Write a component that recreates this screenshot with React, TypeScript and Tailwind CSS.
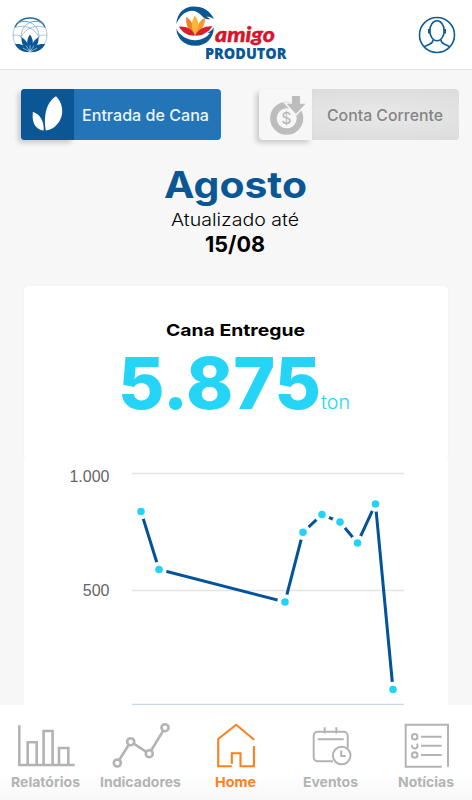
import type { ReactNode } from "react";

const gridLines = [
  { y: 14.5, color: "#e4e4e4" },
  { y: 131.5, color: "#e4e4e4" },
  { y: 245.5, color: "#ccd6eb" },
];

const points = [
  [117, 52.5],
  [135, 110.5],
  [261, 143],
  [279, 73.3],
  [298, 55.5],
  [316, 63],
  [333.5, 84],
  [351.5, 45],
  [369, 230.5],
];

const navItems: { label: string; width: number; active?: boolean; icon: ReactNode }[] = [
  {
    label: "Relatórios",
    width: 69,
    icon: (
      <>
        <path d="M3.3 3.3V43H58.7" />
        <path d="M11.7 43V20.3H20.7V43M27.6 43V9H36.6V43M43 43V26H52.3V43" />
      </>
    ),
  },
  {
    label: "Indicadores",
    width: 81,
    icon: (
      <>
        <path d="M8.2 38L17.8 22.7M22.7 21.6L35.3 29.8M40 28.7L52.2 8.8" />
        <circle cx="6.3" cy="41" r="3.5" />
        <circle cx="19.7" cy="19.7" r="3.5" />
        <circle cx="38.3" cy="31.7" r="3.5" />
        <circle cx="54" cy="5.7" r="3.5" />
      </>
    ),
  },
  {
    label: "Home",
    width: 41,
    active: true,
    icon: (
      <path
        d="M48.2 17.7L30.2 2.8L12.2 17V44.3H25.8M47.9 24V44.3H34.5V31.3H25.8V42"
        strokeWidth="2.1"
      />
    ),
  },
  {
    label: "Eventos",
    width: 55,
    icon: (
      <g strokeWidth="2">
        <path d="M32 39.3H16.7a4 4 0 0 1-4-4V13.7a4 4 0 0 1 4-4H42.7a4 4 0 0 1 4 4V26" />
        <path d="M23.7 5.3V11.5M35.3 5.3V11.5M16.7 17.2H42.7" />
        <circle cx="40.7" cy="33.5" r="8.8" />
        <path d="M40.2 28.5V33.9H44.7" />
      </g>
    ),
  },
  {
    label: "Notícias",
    width: 56,
    icon: (
      <g strokeWidth="2">
        <path d="M45.7 44.7H9.7V2.7H52V44.7" />
        <circle cx="18.7" cy="14.7" r="2.8" />
        <path d="M20.8 21.8a2.8 2.8 0 1 1-4.7 1.2" />
        <circle cx="18.7" cy="33" r="2.8" />
        <path d="M25 14.7H45.7M25 23.7H45.7M25 33H45.7" />
      </g>
    ),
  },
];

type FitTextProps = {
  children: string;
  width: number;
  size: number;
  height: number;
  weight: number;
};

// One line of type stretched to a fixed measure
function FitText({ children, width, size, height, weight }: FitTextProps) {
  return (
    <svg width={width} height={height} className="block overflow-visible">
      <text
        x="0"
        y={height}
        fill="currentColor"
        fontSize={size}
        fontWeight={weight}
        textLength={width}
        lengthAdjust="spacingAndGlyphs"
      >
        {children}
      </text>
    </svg>
  );
}

function LotusGlobe() {
  return (
    <svg width="36" height="36" viewBox="0 0 36 36" fill="none">
      <circle cx="18" cy="18" r="17" stroke="#9dbdd8" strokeWidth="0.9" />
      <path d="M3 10A17 17 0 0 1 33 10" stroke="#2a6da5" strokeWidth="1.4" />
      <g stroke="#5d92bf" strokeWidth="1">
        <path d="M6 6C10 3.8 15 4.2 18 5.5C21 4.2 26 3.8 30 6" />
        <path d="M2.5 11C8 8 20 8 26.5 19M33.5 11C28 8 16 8 9.5 19" opacity="0.6" />
        <path d="M18 5.5C12 8 9 13 9 21M18 5.5C24 8 27 13 27 21" opacity="0.6" />
        <path d="M1 18.5C4 17.5 7 18 10 20M35 18.5C32 17.5 29 18 26 20" opacity="0.5" />
      </g>
      <g fill="#0b5795">
        <path d="M18 35C10 35.5 5 32 3 27C10 26.5 15 29 18 35Z" />
        <path d="M18 35C26 35.5 31 32 33 27C26 26.5 21 29 18 35Z" />
        <path d="M17.5 34C12 31 9 27 9.5 20C14 23 17 27 17.5 34Z" />
        <path d="M18.5 34C24 31 27 27 26.5 20C22 23 19 27 18.5 34Z" />
        <path d="M18 34C14 28 14.5 22 18 17.5C21.5 22 22 28 18 34Z" />
      </g>
      <path
        d="M18 35V28M18 35L14 28.5M18 35L22 28.5M18 35L11 31M18 35L25 31"
        stroke="#bcd3e7"
        strokeWidth="0.7"
      />
    </svg>
  );
}

function Logo() {
  return (
    <svg width="114" height="58" viewBox="0 0 114 58" className="overflow-visible">
      <path
        fill="#0b5795"
        d="M1.3 19C2 8.5 9 1.8 18.5 1.6C28 1.5 35.5 6 38.8 14C35.5 11.5 33 11.5 31.5 11.8L35.5 14.3C32 14.6 29.5 13.8 27.5 11.5C23 6.5 18 4.8 13 6.5C7 8.5 3.8 13.5 1.3 19Z"
      />
      <path
        fill="#0b5795"
        d="M1.3 23.5C3.2 28 9 34.5 19.5 35.3C27 35.7 32.5 31.5 35.2 27.8L32 28.3C35 26.5 37 25 38.8 22.5C38.8 33 31.5 40.6 20.5 40.8C9.5 41 2 34 1.3 23.5Z"
      />
      <path fill="#f08223" d="M20 30C13 26.5 10.5 19.5 11.3 11.7C16.5 15 20 22 20 30Z" />
      <path fill="#f59a2c" d="M20 30C27 26.5 30 20 30.3 12.6C25 15 20.5 22 20 30Z" />
      <path fill="#fbb53a" d="M20 30C15.5 23 16 16 19.9 10.5C24 16 24.5 23 20 30Z" />
      <path fill="#d7202c" d="M20 30.6C13 31 7.5 27.5 4 21.7C11 21 17.5 24 20 30.6Z" />
      <path fill="#d7202c" d="M20 30.6C27 31 33.5 27.5 37.5 21.3C30 20.6 23 24 20 30.6Z" />
      <text
        x="30"
        y="53.6"
        fill="#0b5795"
        fontSize="16"
        fontWeight="800"
        textLength="81.5"
        lengthAdjust="spacingAndGlyphs"
        className="font-['Open_Sans',sans-serif]"
      >
        PRODUTOR
      </text>
      <text
        x="40"
        y="36.5"
        fill="#d7142b"
        stroke="#d7142b"
        strokeWidth="0.4"
        fontSize="21.5"
        fontWeight="900"
        fontStyle="italic"
        textLength="60"
        lengthAdjust="spacingAndGlyphs"
        className="font-['Lato',sans-serif]"
      >
        amigo
      </text>
    </svg>
  );
}

function UserIcon() {
  return (
    <svg width="38" height="38" viewBox="0 0 38 38" fill="none" stroke="#0f5c99" strokeWidth="1.6">
      <circle cx="19" cy="19" r="17.5" />
      <ellipse cx="19" cy="14.8" rx="7.2" ry="10" />
      <path d="M11.2 13V17.5M26.8 13V17.5" strokeWidth="2.4" />
      <path d="M15 24C15 27.5 12 28 6.5 30.5M23 24C23 27.5 26 28 31.5 30.5" />
    </svg>
  );
}

function LeavesIcon() {
  return (
    <svg width="53" height="51" viewBox="0 0 53 51" fill="#fff">
      <path d="M22.7 41.6C14.5 40.5 10.5 34 11.9 22.8C18.5 25.5 23.2 31 22.7 41.6Z" />
      <path d="M24.9 41.6C22.5 29 24.5 13.5 35 7.2C41.5 13.5 43 23 39.3 30.5C36.5 36.5 31.5 40.5 24.9 41.6Z" />
    </svg>
  );
}

function CoinIcon() {
  return (
    <svg width="53" height="51" viewBox="0 0 53 51">
      <circle cx="27.7" cy="29.3" r="13.3" fill="none" stroke="#bdbdbd" strokeWidth="6.5" />
      <path
        d="M33 7H41V14.7H46.5L37 25L27.5 14.7H33Z"
        fill="#bdbdbd"
        stroke="#f7f7f7"
        strokeWidth="3"
        paintOrder="stroke"
      />
      <text x="27.5" y="35" textAnchor="middle" fontSize="16" fill="#b5b5b5">
        $
      </text>
    </svg>
  );
}

function DeliveryChart() {
  const path = points.map(([x, y], i) => `${i ? "L" : "M"}${x} ${y}`).join("");

  return (
    <svg width="424" height="246" className="block font-['Liberation_Sans',Arial,sans-serif]">
      {gridLines.map((line) => (
        <line key={line.y} x1="108" x2="380" y1={line.y} y2={line.y} stroke={line.color} strokeWidth="1.3" />
      ))}
      <g fill="#666" fontSize="16" textAnchor="end">
        <text x="85.5" y="23">1.000</text>
        <text x="85.5" y="137">500</text>
      </g>
      <path d={path} fill="none" stroke="#02539a" strokeWidth="3" />
      {points.map(([x, y]) => (
        <circle key={x} cx={x} cy={y} r="5.8" fill="#22d3f7" stroke="#fff" strokeWidth="4" />
      ))}
    </svg>
  );
}

export default function App() {
  return (
    <div className="flex h-[800px] w-[472px] flex-col overflow-hidden bg-[#f7f7f7] font-['Inter',sans-serif]">
      {/* Header */}
      <header className="flex h-[70px] shrink-0 items-center justify-between border-b-[1.5px] border-[#e2e2e2] bg-white pr-[16.5px] pl-[12px]">
        <LotusGlobe />
        <div className="-mt-[2px] mr-[2px]">
          <Logo />
        </div>
        <UserIcon />
      </header>

      {/* Section switch */}
      <div className="mt-[19px] flex h-[51px] shrink-0 justify-between pr-[13px] pl-[21px]">
        <button className="flex w-[200px] rounded bg-[#2475b8]">
          <span className="h-[51px] w-[53px] rounded-l bg-[#0b5795] shadow-[-3px_3px_5px_rgba(0,0,0,0.18)]">
            <LeavesIcon />
          </span>
          <span className="mt-5 ml-2 text-[#eaf4fc]">
            <FitText width={127} height={12} size={16} weight={550}>
              Entrada de Cana
            </FitText>
          </span>
        </button>
        <button className="flex w-[200px] rounded bg-[radial-gradient(ellipse_at_60%_50%,#e9e9e9,#d9d9d9)]">
          <span className="h-[51px] w-[53px] rounded-l bg-[#f7f7f7] shadow-[-3px_3px_5px_rgba(0,0,0,0.18)]">
            <CoinIcon />
          </span>
          <span className="mt-5 ml-[15px] text-[#858585]">
            <FitText width={116} height={12} size={16} weight={550}>
              Conta Corrente
            </FitText>
          </span>
        </button>
      </div>

      {/* Period */}
      <div className="flex h-[146px] shrink-0 flex-col items-center pt-[31px] pr-[2px]">
        <h1 className="text-[#0b5795]">
          <FitText width={143} height={27} size={37} weight={700}>
            Agosto
          </FitText>
        </h1>
        <p className="mt-[16px] text-black">
          <FitText width={128} height={12} size={17} weight={300}>
            Atualizado até
          </FitText>
        </p>
        <p className="mt-[10px] text-black">
          <FitText width={60} height={16} size={22} weight={700}>
            15/08
          </FitText>
        </p>
      </div>

      {/* Delivered total */}
      <section className="mx-6 flex h-[173px] shrink-0 flex-col items-center rounded bg-white pt-[38px] pr-[2px] shadow-[0_0_2px_1px_#f0f5f6]">
        <h2 className="text-black">
          <FitText width={139} height={12} size={16.5} weight={700}>
            Cana Entregue
          </FitText>
        </h2>
        <div className="mt-[21px] mr-[2px] flex items-end text-[#25d5f8]">
          <FitText width={203} height={52} size={71} weight={850}>
            5.875
          </FitText>
          <FitText width={29} height={52} size={18.5} weight={300}>
            ton
          </FitText>
        </div>
      </section>

      <section className="mx-6 h-[246px] shrink-0 bg-white">
        <DeliveryChart />
      </section>

      {/* Bottom navigation */}
      <nav className="flex flex-1 bg-linear-to-b from-white from-70% to-[#f8f8f8]">
        <div className="-ml-[1.5px] flex">
          {navItems.map(({ label, width, active, icon }) => (
            <a
              key={label}
              className={`flex w-[94.9px] flex-col items-center pt-[17px] ${active ? "text-[#f9811e]" : "text-[#b2b4b3]"}`}
            >
              <svg width="60" height="46" fill="none" stroke="currentColor" strokeWidth="2.6">
                {icon}
              </svg>
              <span className="mt-[9px]">
                <FitText width={width} height={10} size={13.5} weight={650}>
                  {label}
                </FitText>
              </span>
            </a>
          ))}
        </div>
      </nav>
    </div>
  );
}
